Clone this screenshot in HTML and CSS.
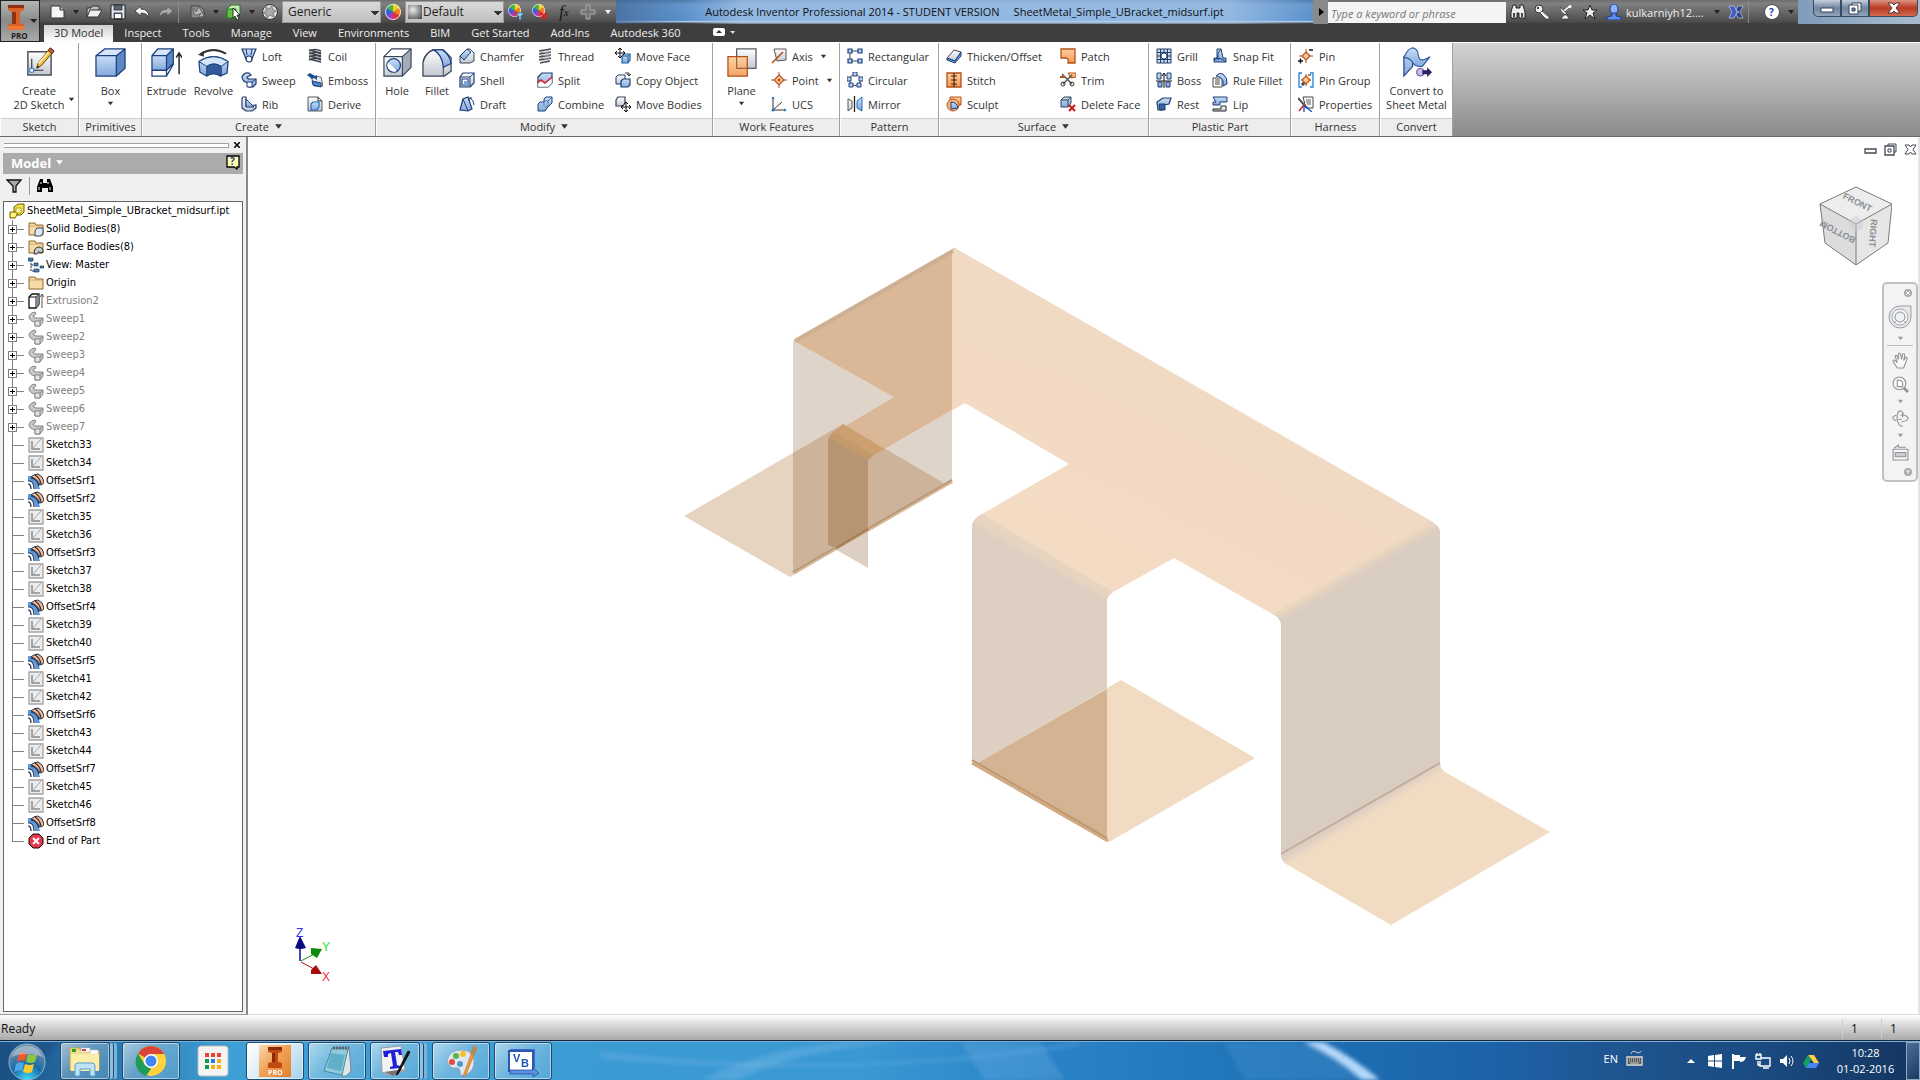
FILE: index.html
```html
<!DOCTYPE html>
<html lang="en">
<head>
<meta charset="utf-8">
<title>Autodesk Inventor Professional 2014 - SheetMetal_Simple_UBracket_midsurf.ipt</title>
<link rel="stylesheet" href="styles.css">
</head>
<body>
<svg class="defs" aria-hidden="true">
<defs>
<linearGradient id="gb" x1="0" y1="0" x2="0" y2="1"><stop offset="0" stop-color="#c9def5"/><stop offset="1" stop-color="#82a8dc"/></linearGradient>
<linearGradient id="gg" x1="0" y1="0" x2="0" y2="1"><stop offset="0" stop-color="#fff"/><stop offset="1" stop-color="#c3c8d0"/></linearGradient>
<linearGradient id="go" x1="0" y1="0" x2="0" y2="1"><stop offset="0" stop-color="#ffcf9f"/><stop offset="1" stop-color="#f59a55"/></linearGradient>
<symbol id="sketch" viewBox="0 0 32 32"><path d="M4 5h24v24H4z" fill="url(#gg)" stroke="#4a505c" stroke-width="1.5"/><path d="M8 12v12h12" fill="none" stroke="#333" stroke-width="1.2"/><path d="M6 22h4v4H6z" fill="#fff" stroke="#1d6fc4"/><path d="M13 22l2-6L27 1l4 3-13 15z" fill="#f7c440" stroke="#5a4010"/><path d="M15 17L28 2" stroke="#fff3b0" stroke-width="1.5"/><path d="M27 1l4 3-2 3-4-3z" fill="#c8603a" stroke="#5a2a10"/><path d="M13 22l1-3 2 2z" fill="#222"/></symbol>
<symbol id="box" viewBox="0 0 32 32"><path d="M1 9h21v21H1z" fill="url(#gb)"/><path d="M1 9l9-7h21l-9 7z" fill="#d5e6f8"/><path d="M22 9l9-7v20l-9 8z" fill="#5e87c4"/><path d="M1 9l9-7h21v20l-9 8H1zM1 9h21v21M22 9l9-7" fill="none" stroke="#1c3f80" stroke-width="1.3"/></symbol>
<symbol id="extrude" viewBox="0 0 32 32"><path d="M1 9h15v15H1z" fill="url(#gb)"/><path d="M1 24h15v6H1z" fill="#fff"/><path d="M1 9l6-7h16l-7 7z" fill="#d5e6f8"/><path d="M16 9l7-7v16l-7 6z" fill="#5e87c4"/><path d="M1 9l6-7h16v16l-7 12H1zM1 9h15v21M16 9l7-7M1 24h15l7-7" fill="none" stroke="#1c3f80" stroke-width="1.3"/><path d="M29 28V7m-3 4l3-5 3 5" fill="none" stroke="#222" stroke-width="1.5"/></symbol>
<symbol id="revolve" viewBox="0 0 32 32"><path d="M1 15q15-10 30 0l-1 12-7 3q-7-5-14 0l-7-4z" fill="url(#gb)" stroke="#1c3f80" stroke-width="1.3"/><path d="M1 15q15-10 30 0l-7 5q-8-5-15 0z" fill="#d5e6f8" stroke="#1c3f80"/><path d="M9 20q7-5 15 0v10q-8-5-15 0z" fill="#345a9c" stroke="#1c3f80"/><path d="M3 7q13-8 26 0" fill="none" stroke="#333" stroke-width="2"/><path d="M0 8l6-4v6z" fill="#333"/></symbol>
<symbol id="hole" viewBox="0 0 32 32"><path d="M2 10h19v20H2z" fill="url(#gg)"/><path d="M2 10l8-8h20l-9 8z" fill="#fff"/><path d="M21 10l9-8v19l-9 9z" fill="#a5abb5"/><path d="M2 10l8-8h20v19l-9 9H2zM2 10h19v20M21 10l9-8" fill="none" stroke="#384458" stroke-width="1.2"/><circle cx="12" cy="19" r="7" fill="url(#gb)" stroke="#1c3f80" stroke-width="1.3"/><path d="M6 16q7 5 9 9a7 7 0 0 1-9-9" fill="#fff"/></symbol>
<symbol id="fillet" viewBox="0 0 32 32"><path d="M1 30V16Q4 5 12 3h10l8 8v14l-7 5z" fill="url(#gg)" stroke="#384458" stroke-width="1.3"/><path d="M12 3q-8 2-11 11M22 30V20" stroke="#384458" fill="none"/><path d="M12 3h9q8 5 9 14l-8 4Q21 8 12 3z" fill="url(#gb)" stroke="#1c3f80" stroke-width="1.3"/></symbol>
<symbol id="plane" viewBox="0 0 32 32"><path d="M11 2h20v20H11z" fill="url(#gg)" stroke="#555c68" stroke-width="1.3"/><path d="M2 10h20v20H2z" fill="url(#go)" fill-opacity=".9" stroke="#b5501a" stroke-width="1.3"/><path d="M11 10v12h11" fill="none" stroke="#8a5030"/></symbol>
<symbol id="convert" viewBox="0 0 32 32"><path d="M3 30V10l9-9v19z" fill="url(#gb)" stroke="#1c3f80" stroke-width="1.2"/><path d="M3 11Q7 1 12 1t6 8 12 1l-8 10q-7 1-10-4T3 11z" fill="url(#gb)" stroke="#2c5aa0" stroke-width="1.2"/><circle cx="20" cy="26" r="4" fill="#c9c0ea" stroke="#5a4aa0"/><path d="M22 24h5v-3l5 5-5 5v-3h-5z" fill="#2c2060"/></symbol>
<symbol id="loft" viewBox="0 0 16 16"><path d="M1 1h14l-4 10q-3 5-6 0z" fill="url(#gb)" stroke="#1f3c73" stroke-width="1.2"/><path d="M5 1l1 6m5-6l-1 6" stroke="#1f3c73"/><circle cx="8" cy="11" r="3" fill="#fff" stroke="#1f3c73" stroke-width="1.2"/></symbol>
<symbol id="sweep" viewBox="0 0 16 16"><path d="M1 5q2-5 7-4l2 2-4 2q0 2 3 2h6v5l-3 3H8v-4Q1 10 1 5z" fill="url(#gb)" stroke="#1f3c73" stroke-width="1.2"/><path d="M6 10h5v5H6z" fill="#fff" stroke="#1f3c73"/><path d="M11 10l4-3" stroke="#1f3c73"/></symbol>
<symbol id="rib" viewBox="0 0 16 16"><path d="M2 1h3v9l10-1v3l-4 3H5l-4-3V3z" fill="url(#gg)" stroke="#1f3c73" stroke-width="1.2"/><path d="M5 3l8 8H5z" fill="url(#gb)" stroke="#1f3c73"/></symbol>
<symbol id="coil" viewBox="0 0 16 16"><path d="M2 3q6-3 12 0M2 6q6-3 12 0M2 9q6-3 12 0M2 12q6-3 12 0M2 2l12 3M2 5l12 3M2 8l12 3M2 11l12 3" fill="none" stroke="#3d424a" stroke-width="1.4"/></symbol>
<symbol id="emboss" viewBox="0 0 16 16"><path d="M4 4l10 1 2 9H7z" fill="url(#gg)" stroke="#666"/><path d="M0 3l3-2 5 3 2-1v5L7 6 5 7z" fill="#1f4c93"/><path d="M5 9l9 2v4l-8-2z" fill="#4a8ad0" stroke="#1f3c73"/></symbol>
<symbol id="derive" viewBox="0 0 16 16"><path d="M1 1h10l4 4v10H1z" fill="url(#gg)" stroke="#555"/><path d="M11 1v4h4" fill="none" stroke="#333"/><path d="M4 8l2-2h6v5l-2 3H4z" fill="url(#gb)" stroke="#1d6fc4" stroke-width="1.2"/></symbol>
<symbol id="chamfer" viewBox="0 0 16 16"><path d="M1 15V8l7-7h3l4 4v8l-4 2z" fill="url(#gg)" stroke="#384458"/><path d="M1 8l7-7 4 3-7 8z" fill="url(#gb)" stroke="#1f3c73"/></symbol>
<symbol id="shell" viewBox="0 0 16 16"><path d="M1 5l3-4h11v10l-4 4H1z" fill="url(#gg)" stroke="#1f3c73" stroke-width="1.2"/><path d="M1 5h10v10M11 5l4-4" fill="none" stroke="#1f3c73"/><path d="M3 7h6v6H3z" fill="#fff" stroke="#1f4c93" stroke-width="1.2"/><path d="M5 9h4v4H5z" fill="#7ba5dc"/></symbol>
<symbol id="draft" viewBox="0 0 16 16"><path d="M1 14L4 3l5-2 4 12-4 2z" fill="url(#gb)" stroke="#1f3c73" stroke-width="1.2"/><path d="M4 3l5 12M11 2q4 2 4 7m-5-7h3M10 2v3" fill="none" stroke="#1f3c73"/></symbol>
<symbol id="thread" viewBox="0 0 16 16"><path d="M4 1h8v14H4z" fill="#e4e6ea"/><path d="M2 3l12-2M2 6l12-2M2 9l12-2M2 12l12-2M3 15l10-2" stroke="#4a4f58" stroke-width="1.4"/><path d="M3 4l10 1M3 7l10 1M3 10l10 1" stroke="#999"/></symbol>
<symbol id="split" viewBox="0 0 16 16"><path d="M1 5l4-4h10v10l-4 4H1z" fill="url(#gb)" stroke="#1f3c73" stroke-width="1.2"/><path d="M1 11l3-2 4 2 7-5v5l-4 4H1z" fill="#fff" stroke="#888" stroke-width=".6"/><path d="M0 11l4-3 4 3 7-6" fill="none" stroke="#d62424" stroke-width="1.5"/></symbol>
<symbol id="combine" viewBox="0 0 16 16"><path d="M1 8l2-2h4V3l2-2h6v6l-4 4-1 1-2 3H1z" fill="url(#gb)" stroke="#1f3c73"/><path d="M7 6v4M11 5v6H8M11 5l4-4M7 5h4" fill="none" stroke="#3b64a5" stroke-width=".8"/></symbol>
<symbol id="moveface" viewBox="0 0 16 16"><path d="M7 8l2-2h6v6l-2 3H7z" fill="url(#gb)" stroke="#1d5fa4" stroke-width="1.2"/><path d="M7 8h6v7m0-7l2-2" fill="none" stroke="#1d5fa4"/><path d="M5 0v10M0 5h10M3 2l2-2 2 2M3 8l2 2 2-2M2 3L0 5l2 2M8 3l2 2-2 2" fill="none" stroke="#111"/></symbol>
<symbol id="copyobj" viewBox="0 0 16 16"><path d="M1 5l2-2h7v6l-2 3H1z" fill="url(#gg)" stroke="#1f3c73"/><path d="M6 9l2-2h7v6l-2 2H6z" fill="url(#gb)" stroke="#1f3c73" stroke-width="1.2"/><path d="M10 1h4v3m-2-2l2 2 2-2" fill="none" stroke="#333"/></symbol>
<symbol id="movebody" viewBox="0 0 16 16"><path d="M1 4l2-3h7v6l-2 3H1z" fill="url(#gg)" stroke="#384458" stroke-width="1.2"/><path d="M11 6v10M6 11h10M9 8l2-2 2 2M9 14l2 2 2-2M8 9l-2 2 2 2M14 9l2 2-2 2" fill="none" stroke="#111"/></symbol>
<symbol id="axis" viewBox="0 0 16 16"><path d="M3 1h12v11l-9 1z" fill="url(#gg)" stroke="#555"/><path d="M1 15L12 4" stroke="#b5501a" stroke-width="1.6"/></symbol>
<symbol id="point" viewBox="0 0 16 16"><path d="M8 0v16M0 8h16" stroke="#b5501a"/><path d="M8 3l5 5-5 5-5-5z" fill="#fbc89a" stroke="#b5501a" stroke-width="1.2"/><circle cx="8" cy="8" r="1.5" fill="#b5501a"/></symbol>
<symbol id="ucs" viewBox="0 0 16 16"><path d="M2 1v13h13M2 14l9-8" fill="none" stroke="#333"/><path d="M1 3l1-2 1 2m10 10l2 1-2 1" fill="none" stroke="#1d6fc4"/><circle cx="2" cy="14" r="1.5" fill="#1d6fc4"/></symbol>
<symbol id="rect" viewBox="0 0 16 16"><path d="M3 3h10M3 3v10h10" fill="none" stroke="#444"/><path d="M1 1h4v4H1zM11 1h4v4h-4zM1 11h4v4H1zM11 11h4v4h-4z" fill="#b9d2f2" stroke="#1c3f80" stroke-width="1.2"/></symbol>
<symbol id="circ" viewBox="0 0 16 16"><circle cx="8" cy="8" r="5.5" fill="none" stroke="#444"/><path d="M6 0h4v4H6zM0 5h4v4H0zM12 5h4v4h-4zM2 11h4v4H2zM10 11h4v4h-4z" fill="#b9d2f2" stroke="#1c3f80"/></symbol>
<symbol id="mirror" viewBox="0 0 16 16"><path d="M1 3l4 2v7l-4 3z" fill="url(#gg)" stroke="#555"/><path d="M15 1l-5 4v7l5 3z" fill="url(#gb)" stroke="#1d6fc4"/><path d="M7.500 0v16" stroke="#222" stroke-width="1.3"/></symbol>
<symbol id="thicken" viewBox="0 0 16 16"><path d="M1 10l7-8 7 2-6 9z" fill="url(#gg)" stroke="#444"/><path d="M1 10l8 3 6-9v4l-6 7-8-3z" fill="#5aa3dc" stroke="#1f3c73"/></symbol>
<symbol id="stitch" viewBox="0 0 16 16"><path d="M1 1h14v14H1z" fill="url(#go)" stroke="#b5501a" stroke-width="1.3"/><path d="M8 1v14M5 4h6M5 8h6M5 12h6" stroke="#442211" stroke-width="1.2"/></symbol>
<symbol id="sculpt" viewBox="0 0 16 16"><path d="M4 1h11v8H4z" fill="url(#go)" stroke="#b5501a"/><circle cx="7" cy="9" r="6" fill="#fcb47c" stroke="#b5501a"/><path d="M5 13V6q6 0 7 6z" fill="url(#gb)" stroke="#1c3f80"/></symbol>
<symbol id="patch" viewBox="0 0 16 16"><path d="M1 1h14v14H8q1-5-2-5H1z" fill="url(#go)" stroke="#b5501a" stroke-width="1.3"/></symbol>
<symbol id="trim" viewBox="0 0 16 16"><path d="M8 1h8v4l-5 1z" fill="url(#go)" stroke="#b5501a"/><path d="M2 2l10 10M12 3L3 12" stroke="#555" stroke-width="1.5"/><circle cx="3" cy="12" r="2" fill="none" stroke="#333"/><circle cx="12" cy="12" r="2" fill="none" stroke="#333"/><path d="M0 5h5" stroke="#b5501a" stroke-width="2"/></symbol>
<symbol id="delface" viewBox="0 0 16 16"><path d="M1 4l3-3h7v6l-3 4H1z" fill="url(#gb)" stroke="#384458"/><path d="M1 4h7v7m0-7l3-3" fill="none" stroke="#384458"/><path d="M9 9l6 6m0-6l-6 6" stroke="#d01818" stroke-width="2"/></symbol>
<symbol id="grill" viewBox="0 0 16 16"><path d="M1 1h14v14H1z" fill="#c9d9ee"/><path d="M1 1h14v14H1zM1 4.500h14M1 8h14M1 11.500h14M4.500 1v14M8 1v14M11.500 1v14" fill="none" stroke="#26406e"/><circle cx="8" cy="8" r="3" fill="#fff" stroke="#26406e"/></symbol>
<symbol id="boss" viewBox="0 0 16 16"><path d="M1 1h4v6H1zM11 1h4v6h-4zM2 10h4v5H2zM10 10h4v5h-4z" fill="url(#gb)" stroke="#1f3c73"/><path d="M8 16V2M6 4l2-3 2 3M0 9h16" fill="none" stroke="#111"/></symbol>
<symbol id="rest" viewBox="0 0 16 16"><path d="M1 6l6-4h8l-2 6-5 1-2 5H2z" fill="url(#gb)" stroke="#1f3c73" stroke-width="1.2"/><path d="M3 8h6v6H4z" fill="#3b64a5" stroke="#1f3c73"/></symbol>
<symbol id="snap" viewBox="0 0 16 16"><path d="M5 1h4l2 9h3v4H2v-4h3z" fill="url(#gb)" stroke="#1f3c73"/><path d="M9 1l-3 4v7M2 12q6-4 12 2" stroke="#1c3f80" fill="none"/></symbol>
<symbol id="rulefillet" viewBox="0 0 16 16"><path d="M1 6h9v9H1z" fill="#fff" stroke="#444"/><path d="M3 8h5M3 10h5M3 12h5" stroke="#444"/><path d="M4 4q3-4 7-2 5 4 4 10l-4 2V9Q9 4 4 4z" fill="url(#gb)" stroke="#1c3f80"/></symbol>
<symbol id="lip" viewBox="0 0 16 16"><path d="M1 1h14v5H8v3H1V6h3z" fill="url(#gb)" stroke="#1f3c73"/><path d="M1 13h8v-3h5v5H1z" fill="url(#gg)" stroke="#222"/></symbol>
<symbol id="pin" viewBox="0 0 16 16"><path d="M8 1v14M1 8h14" stroke="#b5501a"/><path d="M8 4l4 4-4 4-4-4z" fill="#fbc89a" stroke="#b5501a" stroke-width="1.2"/><path d="M0 13h5M2.500 10.500v5M11 2h4" stroke="#111" stroke-width="1.3"/></symbol>
<symbol id="pingroup" viewBox="0 0 16 16"><path d="M4 1H1v14h3M12 1h3v14h-3" fill="none" stroke="#1d84d8" stroke-width="1.3"/><path d="M8 2v12M3 8h10" stroke="#b5501a"/><path d="M8 4l4 4-4 4-4-4z" fill="#fbc89a" stroke="#b5501a" stroke-width="1.2"/><path d="M3 12h4M5 10v4M10 3h3" stroke="#111"/></symbol>
<symbol id="props" viewBox="0 0 16 16"><path d="M5 1h10v11H8z" fill="#fff" stroke="#444"/><path d="M8 4h5M8 6h5M9 8h4" stroke="#555"/><path d="M0 2l9 10" stroke="#555" stroke-width="2"/><path d="M1 15l5-6" stroke="#d02020" stroke-width="1.5"/><path d="M6 10v6m1-6l7 6" stroke="#1d50c4" stroke-width="1.3"/></symbol>
<symbol id="new" viewBox="0 0 16 16"><path d="M1 2h9l4 4v8H1z" fill="#f5f5f5" stroke="#333"/><path d="M10 2v4h4" fill="#bbb" stroke="#333"/></symbol>
<symbol id="open" viewBox="0 0 16 16"><path d="M1 13V4h4l1-2h7v4" fill="#bbb" stroke="#333"/><path d="M1 13l3-7h12l-4 7z" fill="#eee" stroke="#333"/></symbol>
<symbol id="save" viewBox="0 0 16 16"><path d="M1 1h14v14H1z" fill="#dfe2e8" stroke="#222"/><path d="M4 1h8v5H4zM4 9h8v6H4z" fill="#5a6478" stroke="#222" stroke-width=".7"/><path d="M5 10h6v4H5z" fill="#fff"/></symbol>
<symbol id="undo" viewBox="0 0 16 16"><path d="M1 7l6-5v3q8 0 8 9-2-5-8-5v3z" fill="#f5f5f5" stroke="#333" stroke-width=".8"/></symbol>
<symbol id="redo" viewBox="0 0 16 16"><path d="M15 7L9 2v3q-8 0-8 9 2-5 8-5v3z" fill="#aaa" stroke="#555" stroke-width=".8"/></symbol>
<symbol id="update" viewBox="0 0 16 16"><path d="M1 2h9l4 4v8H1z" fill="#888" stroke="#444"/><path d="M3 4l3 4 3-5 5 9-5 1 2-4-4 2-3-1z" fill="#bbb" stroke="#555" stroke-width=".7"/></symbol>
<symbol id="select" viewBox="0 0 16 16"><path d="M1 5l4-4h9v9l-4 4H1z" fill="#c8e6b8" stroke="#1f7a1f"/><path d="M1 5h9v9H1z" fill="#5fbf3f" stroke="#1f7a1f"/><path d="M7 4v10l2-2 2 4 2-1-2-4h3z" fill="#fff" stroke="#111" stroke-width=".8"/></symbol>
<symbol id="ball" viewBox="0 0 16 16"><circle cx="8" cy="8" r="7.500" fill="#ddd" stroke="#333"/><path d="M4 3l3 2 3-3 1 4 3 1-3 2 1 4-4-2-3 3-1-4-3-1 3-2z" fill="#aaa" stroke="#666" stroke-width=".7"/></symbol>
<symbol id="wheel" viewBox="0 0 16 16"><path d="M8 8V0a8 8 0 0 1 6.900 4z" fill="#f5d020"/><path d="M8 8l6.900-4a8 8 0 0 1 0 8z" fill="#f08020"/><path d="M8 8l6.900 4A8 8 0 0 1 8 16z" fill="#e03040"/><path d="M8 8v8a8 8 0 0 1-6.900-4z" fill="#a040c0"/><path d="M8 8l-6.900 4a8 8 0 0 1 0-8z" fill="#3060e0"/><path d="M8 8L1.100 4A8 8 0 0 1 8 0z" fill="#40b050"/><circle cx="8" cy="8" r="7.500" fill="none" stroke="#fff" stroke-opacity=".8"/></symbol>
<symbol id="wheeldrop" viewBox="0 0 16 16"><use href="#wheel" width="13" height="13"/><path d="M8 9h8l-3 3v4h-2v-4z" fill="#9bdcf8" stroke="#1d5fa4" stroke-width=".7"/></symbol>
<symbol id="wheelx" viewBox="0 0 16 16"><use href="#wheel" width="13" height="13"/><path d="M9 9l6 6m0-6l-6 6" stroke="#e02020" stroke-width="2"/></symbol>
<symbol id="cross" viewBox="0 0 16 16"><path d="M6 1h4v5h5v4h-5v5H6v-5H1V6h5z" fill="#777" stroke="#aaa"/></symbol>
<symbol id="binoc" viewBox="0 0 16 16"><path d="M3 1h3v3h4V1h3l2 7v6H9V9H7v5H1V8z" fill="#eee" stroke="#222"/><path d="M3 9h2v4H3zM11 9h2v4h-2z" fill="#444"/></symbol>
<symbol id="binocblack" viewBox="0 0 16 16"><path d="M3 1h3v4h4V1h3l3 8v5h-5v-4H5v4H0V9z" fill="#000"/><path d="M2 9v3M13 9v3M4 4v2M11 4v2" stroke="#fff"/></symbol>
<symbol id="key" viewBox="0 0 16 16"><circle cx="5" cy="5" r="4" fill="#f2f2f2" stroke="#333"/><path d="M8 7l7 6v2h-3L6 9z" fill="#f2f2f2" stroke="#333" stroke-width=".7"/><circle cx="4" cy="4" r="1.200" fill="#444"/></symbol>
<symbol id="dish" viewBox="0 0 16 16"><path d="M2 3q0 7 8 8zM6 11l-3 4h8l-2-4z" fill="#f2f2f2" stroke="#333" stroke-width=".7"/><path d="M6 7l6-5" stroke="#fff" stroke-width="1.500"/><circle cx="12" cy="2.500" r="1.500" fill="#fff"/></symbol>
<symbol id="star" viewBox="0 0 16 16"><path d="M8 1l2 5h5l-4 3 2 6-5-4-5 4 2-6-4-3h5z" fill="#eee" stroke="#222"/></symbol>
<symbol id="user" viewBox="0 0 16 16"><ellipse cx="8" cy="5" rx="4" ry="5" fill="#8fb2ff" stroke="#1c3f90"/><path d="M6 9h4v3l5 1v3H1v-3l5-1z" fill="#5f8af0" stroke="#1c3f90"/></symbol>
<symbol id="exch" viewBox="0 0 16 16"><path d="M1 2h5l3 6-3 6H1l3-6z" fill="#3a5ad0" stroke="#dde" stroke-width=".6"/><path d="M15 2h-5L8 6l3 2-3 2 2 4h5l-3-6z" fill="#27408f" stroke="#dde" stroke-width=".6"/></symbol>
<symbol id="down" viewBox="0 0 8 8"><path d="M1 2h6L4 6z" fill="currentColor"/></symbol>
<symbol id="root" viewBox="0 0 16 16"><path d="M5 4l4-3h6v8l-3 3H5z" fill="#f5e04a" stroke="#6a5a00"/><path d="M1 9h7v3l-2 3H1z" fill="#fff27a" stroke="#6a5a00"/><path d="M7 5h5v5H7z" fill="#fff9b0" stroke="#998800" stroke-width=".7"/></symbol>
<symbol id="folder" viewBox="0 0 16 16"><path d="M1 14V2h6l1 2h7v10z" fill="#f7dba6" stroke="#8a6430"/><path d="M1 5h14" stroke="#c89a5a" stroke-width=".7"/></symbol>
<symbol id="fsolid" viewBox="0 0 16 16"><use href="#folder"/><path d="M7 10l2-3h6v5l-2 3H7z" fill="#dce8f8" stroke="#384458"/></symbol>
<symbol id="fsurf" viewBox="0 0 16 16"><use href="#folder"/><path d="M6 15q0-7 5-7 4 0 4 5l-3 1q-1-3-3 1z" fill="#c5cad2" stroke="#333"/></symbol>
<symbol id="view" viewBox="0 0 16 16"><path d="M3 3v11h4M3 8h3" fill="none" stroke="#222" stroke-dasharray="2 1"/><path d="M0 1h5v3H0zM6 6h4v3H6zM6 12h5v3H6zM12 9h4v2h-4z" fill="#3f86c8" stroke="#123" stroke-width=".6"/></symbol>
<symbol id="textr" viewBox="0 0 16 16"><path d="M1 4l3-3h7v10l-3 4H1z" fill="#fff" stroke="#111" stroke-width="1.3"/><path d="M1 4h7v11m0-11l3-3" fill="none" stroke="#111"/><path d="M8 4l3-3v10l-3 4z" fill="#888"/><path d="M14 15V2m-2 2l2-3 2 3" fill="none" stroke="#555"/></symbol>
<symbol id="tsweep" viewBox="0 0 16 16"><path d="M1 5q2-4 6-4l1 2-3 2q0 1 3 2h7v4l-3 4H7v-4Q1 10 1 5z" fill="#c8c8c8" stroke="#858585"/><path d="M7 10h5v5H7zm5 0l3-3" fill="#e6e6e6" stroke="#858585"/></symbol>
<symbol id="tsk" viewBox="0 0 16 16"><path d="M1 1h14v14H1z" fill="#ececec" stroke="#a4a4a4" stroke-width="1.300"/><path d="M4 4v8h8" fill="none" stroke="#8a8a8a" stroke-width="1.500"/><path d="M5 11l8-9" stroke="#a4a4a4"/></symbol>
<symbol id="toff" viewBox="0 0 16 16"><path d="M0 3h3q7 3 9 13H7Q7 10 3 8H0z" fill="#5a9ad8"/><path d="M3 4q3-3 7-3 5 2 6 8-1 3-4 3Q10 6 3 4z" fill="#fcb985" stroke="#1c2c50"/><path d="M0 8h2q4 1 4 8M0 11h1q2 1 2 5M3 5q6 1 8 8M7 2q5 3 6 9" fill="none" stroke="#1c2c50" stroke-width="1.200"/></symbol>
<symbol id="tend" viewBox="0 0 16 16"><path d="M5 1h6l4 4v6l-4 4H5l-4-4V5z" fill="#e8344a" stroke="#111"/><path d="M5 5l6 6m0-6l-6 6" stroke="#fff" stroke-width="2"/></symbol>
<symbol id="filter" viewBox="0 0 16 16"><path d="M1 2h14l-5 6v6H7V8z" fill="#aaa" stroke="#111" stroke-width="1.300"/></symbol>
<symbol id="cube" viewBox="0 0 80 84"><path d="M44 5L80 22 44 42 8 22z" fill="#ededed"/><path d="M8 22l36 20v41L13 61z" fill="#dcdcdc"/><path d="M80 22L44 42v41l32-22z" fill="#e6e6e6"/><path d="M44 5l36 17-4 39-32 22-31-22-5-39zM8 22l36 20 36-20M44 42v41" fill="none" stroke="#7a7a7a"/><path d="M37 38l7-4 7 4v8l-7 4-7-4z" fill="#c5ccd6" opacity=".5"/></symbol>
</defs>
</svg>

<header class="top">
  <button class="app" aria-label="Application menu"><svg width="38" height="40" viewBox="0 0 38 40"><path d="M7 4h16v5l-4 2v11l4 1v6H7v-5l4-2V11L7 9z" fill="#d9622b"/><path d="M7 4h16v3H7zM11 11h4v12h-4z" fill="#8f3210"/><path d="M7 25h16v4H7z" fill="#f07a35"/><path d="M29 18h7l-3 4z" fill="#222"/><text x="10" y="38" class="apptext">PRO</text></svg></button>
  <div class="titlebar">
    <div class="qat">
      <button class="ib" aria-label="New"><svg><use href="#new"/></svg></button><button class="ab" aria-label="New options"><svg><use href="#down"/></svg></button>
      <button class="ib" aria-label="Open"><svg><use href="#open"/></svg></button><button class="ib" aria-label="Save"><svg><use href="#save"/></svg></button><button class="ib" aria-label="Undo"><svg><use href="#undo"/></svg></button><button class="ib" aria-label="Redo"><svg><use href="#redo"/></svg></button>
      <i class="vsep"></i>
      <button class="ib" aria-label="Update"><svg><use href="#update"/></svg></button><button class="ab" aria-label="Update options"><svg><use href="#down"/></svg></button>
      <button class="ib" aria-label="Select"><svg><use href="#select"/></svg></button><button class="ab" aria-label="Select options"><svg><use href="#down"/></svg></button>
      <button class="ib" aria-label="Material"><svg><use href="#ball"/></svg></button>
      <select class="combo" aria-label="Material"><option>Generic</option></select>
      <button class="ib" aria-label="Appearance"><svg><use href="#wheel"/></svg></button>
      <select class="combo sphere" aria-label="Appearance"><option>Default</option></select>
      <button class="ib" aria-label="Adjust appearance"><svg><use href="#wheeldrop"/></svg></button><button class="ib" aria-label="Clear appearance"><svg><use href="#wheelx"/></svg></button>
      <button class="ib fx" aria-label="Parameters">f<sub>x</sub></button><button class="ib" aria-label="Measure"><svg><use href="#cross"/></svg></button>
      <button class="ab last" aria-label="Customize"><svg><use href="#down"/></svg></button>
    </div>
    <div class="caption"><span>Autodesk Inventor Professional 2014 - STUDENT VERSION</span><span>SheetMetal_Simple_UBracket_midsurf.ipt</span></div>
    <div class="info">
      <button class="play" aria-label="Collapse search"><svg width="8" height="10" viewBox="0 0 8 10"><path d="M2 1l5 4-5 4z" fill="#000"/></svg></button>
      <input class="search" type="text" aria-label="Search" placeholder="Type a keyword or phrase">
      <button class="ib" aria-label="Find"><svg><use href="#binoc"/></svg></button><button class="ib" aria-label="Subscription"><svg><use href="#key"/></svg></button><button class="ib" aria-label="Communication center"><svg><use href="#dish"/></svg></button><button class="ib" aria-label="Favorites"><svg><use href="#star"/></svg></button>
      <button class="acct"><svg><use href="#user"/></svg>kulkarniyh12....</button><button class="ab" aria-label="Account options"><svg><use href="#down"/></svg></button>
      <button class="ib" aria-label="Exchange apps"><svg><use href="#exch"/></svg></button><i class="vsep"></i>
      <button class="ib" aria-label="Help"><svg viewBox="0 0 16 16"><circle cx="8" cy="8" r="7.500" fill="#fff" stroke="#445"/><text x="5" y="12" class="qm">?</text></svg></button><button class="ab" aria-label="Help options"><svg><use href="#down"/></svg></button>
    </div>
    <div class="wincontrols">
      <button aria-label="Minimize"><svg width="14" height="10" viewBox="0 0 14 10"><path d="M1 5h12v4H1z" fill="#fff" stroke="#345"/></svg></button>
      <button aria-label="Restore"><svg width="14" height="13" viewBox="0 0 14 13"><path d="M4 1h9v8H4z" fill="#fff" stroke="#345"/><path d="M1 3h9v9H1z" fill="#fff" stroke="#345"/><path d="M4 6h3v3H4z" fill="#789" stroke="#345"/></svg></button>
      <button class="close" aria-label="Close"><svg width="14" height="12" viewBox="0 0 14 12"><path d="M1 1h4l2 2 2-2h4L9 6l4 5H9L7 9l-2 2H1l4-5z" fill="#fff" stroke="#533"/></svg></button>
    </div>
  </div>
  <nav class="tabs">
    <button class="on">3D Model</button><button>Inspect</button><button>Tools</button><button>Manage</button><button>View</button><button>Environments</button><button>BIM</button><button>Get Started</button><button>Add-Ins</button><button>Autodesk 360</button>
    <button class="mini" aria-label="Minimize ribbon"><svg width="26" height="10" viewBox="0 0 26 10"><rect x="1" y="1" width="12" height="8" rx="2" fill="#fff"/><path d="M4 6h6L7 3z" fill="#333"/><path d="M18 4h5l-2 3z" fill="#ddd"/></svg></button>
  </nav>
</header>

<main class="ribbon">
  <section class="panel p-sketch"><div class="tools">
    <button class="big"><svg><use href="#sketch"/></svg><span>Create<br>2D Sketch</span></button><button class="side" aria-label="Sketch options"><svg><use href="#down"/></svg></button></div><h2>Sketch</h2></section>
  <section class="panel p-prim"><div class="tools"><button class="big"><svg><use href="#box"/></svg><span>Box</span><svg class="dn"><use href="#down"/></svg></button></div><h2>Primitives</h2></section>
  <section class="panel p-create"><div class="tools">
    <button class="big"><svg><use href="#extrude"/></svg><span>Extrude</span></button>
    <button class="big"><svg><use href="#revolve"/></svg><span>Revolve</span></button>
    <div class="col"><button><svg><use href="#loft"/></svg>Loft</button><button><svg><use href="#sweep"/></svg>Sweep</button><button><svg><use href="#rib"/></svg>Rib</button></div>
    <div class="col"><button><svg><use href="#coil"/></svg>Coil</button><button><svg><use href="#emboss"/></svg>Emboss</button><button><svg><use href="#derive"/></svg>Derive</button></div>
  </div><h2>Create <svg><use href="#down"/></svg></h2></section>
  <section class="panel p-modify"><div class="tools">
    <button class="big"><svg><use href="#hole"/></svg><span>Hole</span></button>
    <button class="big"><svg><use href="#fillet"/></svg><span>Fillet</span></button>
    <div class="col"><button><svg><use href="#chamfer"/></svg>Chamfer</button><button><svg><use href="#shell"/></svg>Shell</button><button><svg><use href="#draft"/></svg>Draft</button></div>
    <div class="col"><button><svg><use href="#thread"/></svg>Thread</button><button><svg><use href="#split"/></svg>Split</button><button><svg><use href="#combine"/></svg>Combine</button></div>
    <div class="col"><button><svg><use href="#moveface"/></svg>Move Face</button><button><svg><use href="#copyobj"/></svg>Copy Object</button><button><svg><use href="#movebody"/></svg>Move Bodies</button></div>
  </div><h2>Modify <svg><use href="#down"/></svg></h2></section>
  <section class="panel p-work"><div class="tools">
    <button class="big"><svg><use href="#plane"/></svg><span>Plane</span><svg class="dn"><use href="#down"/></svg></button>
    <div class="col"><button><svg><use href="#axis"/></svg>Axis<svg class="dn"><use href="#down"/></svg></button><button><svg><use href="#point"/></svg>Point<svg class="dn"><use href="#down"/></svg></button><button><svg><use href="#ucs"/></svg>UCS</button></div>
  </div><h2>Work Features</h2></section>
  <section class="panel p-pattern"><div class="tools">
    <div class="col"><button><svg><use href="#rect"/></svg>Rectangular</button><button><svg><use href="#circ"/></svg>Circular</button><button><svg><use href="#mirror"/></svg>Mirror</button></div>
  </div><h2>Pattern</h2></section>
  <section class="panel p-surface"><div class="tools">
    <div class="col"><button><svg><use href="#thicken"/></svg>Thicken/Offset</button><button><svg><use href="#stitch"/></svg>Stitch</button><button><svg><use href="#sculpt"/></svg>Sculpt</button></div>
    <div class="col"><button><svg><use href="#patch"/></svg>Patch</button><button><svg><use href="#trim"/></svg>Trim</button><button><svg><use href="#delface"/></svg>Delete Face</button></div>
  </div><h2>Surface <svg><use href="#down"/></svg></h2></section>
  <section class="panel p-plastic"><div class="tools">
    <div class="col"><button><svg><use href="#grill"/></svg>Grill</button><button><svg><use href="#boss"/></svg>Boss</button><button><svg><use href="#rest"/></svg>Rest</button></div>
    <div class="col"><button><svg><use href="#snap"/></svg>Snap Fit</button><button><svg><use href="#rulefillet"/></svg>Rule Fillet</button><button><svg><use href="#lip"/></svg>Lip</button></div>
  </div><h2>Plastic Part</h2></section>
  <section class="panel p-harness"><div class="tools">
    <div class="col"><button><svg><use href="#pin"/></svg>Pin</button><button><svg><use href="#pingroup"/></svg>Pin Group</button><button><svg><use href="#props"/></svg>Properties</button></div>
  </div><h2>Harness</h2></section>
  <section class="panel p-convert"><div class="tools"><button class="big"><svg><use href="#convert"/></svg><span>Convert to<br>Sheet Metal</span></button></div><h2>Convert</h2></section>
</main>

<div class="work">
  <aside class="browser">
    <div class="grip"><i></i><button aria-label="Close panel"><svg width="6" height="6" viewBox="0 0 6 6"><path d="M0 0l6 6M6 0L0 6" stroke="#000" stroke-width="1.500"/></svg></button></div>
    <div class="bhead"><button>Model <svg><use href="#down"/></svg></button><button aria-label="Help"><svg class="hq" viewBox="0 0 14 15"><path d="M1 1h12v11h-2v2l-3-2H1z" fill="#ffffb0" stroke="#000" stroke-width="1.300"/><text x="4" y="10" class="qm">?</text></svg></button></div>
    <div class="btools"><button aria-label="Filter"><svg><use href="#filter"/></svg></button><i></i><button aria-label="Find"><svg><use href="#binocblack"/></svg></button></div>
    <div class="tree">
      <div class="root"><svg><use href="#root"/></svg>SheetMetal_Simple_UBracket_midsurf.ipt</div>
      <ul>
        <li><button aria-label="Expand"></button><svg><use href="#fsolid"/></svg>Solid Bodies(8)</li>
        <li><button aria-label="Expand"></button><svg><use href="#fsurf"/></svg>Surface Bodies(8)</li>
        <li><button aria-label="Expand"></button><svg><use href="#view"/></svg>View: Master</li>
        <li><button aria-label="Expand"></button><svg><use href="#folder"/></svg>Origin</li>
        <li class="dim"><button aria-label="Expand"></button><svg><use href="#textr"/></svg>Extrusion2</li>
        <li class="dim"><button aria-label="Expand"></button><svg><use href="#tsweep"/></svg>Sweep1</li>
        <li class="dim"><button aria-label="Expand"></button><svg><use href="#tsweep"/></svg>Sweep2</li>
        <li class="dim"><button aria-label="Expand"></button><svg><use href="#tsweep"/></svg>Sweep3</li>
        <li class="dim"><button aria-label="Expand"></button><svg><use href="#tsweep"/></svg>Sweep4</li>
        <li class="dim"><button aria-label="Expand"></button><svg><use href="#tsweep"/></svg>Sweep5</li>
        <li class="dim"><button aria-label="Expand"></button><svg><use href="#tsweep"/></svg>Sweep6</li>
        <li class="dim"><button aria-label="Expand"></button><svg><use href="#tsweep"/></svg>Sweep7</li>
        <li><svg><use href="#tsk"/></svg>Sketch33</li>
        <li><svg><use href="#tsk"/></svg>Sketch34</li>
        <li><svg><use href="#toff"/></svg>OffsetSrf1</li>
        <li><svg><use href="#toff"/></svg>OffsetSrf2</li>
        <li><svg><use href="#tsk"/></svg>Sketch35</li>
        <li><svg><use href="#tsk"/></svg>Sketch36</li>
        <li><svg><use href="#toff"/></svg>OffsetSrf3</li>
        <li><svg><use href="#tsk"/></svg>Sketch37</li>
        <li><svg><use href="#tsk"/></svg>Sketch38</li>
        <li><svg><use href="#toff"/></svg>OffsetSrf4</li>
        <li><svg><use href="#tsk"/></svg>Sketch39</li>
        <li><svg><use href="#tsk"/></svg>Sketch40</li>
        <li><svg><use href="#toff"/></svg>OffsetSrf5</li>
        <li><svg><use href="#tsk"/></svg>Sketch41</li>
        <li><svg><use href="#tsk"/></svg>Sketch42</li>
        <li><svg><use href="#toff"/></svg>OffsetSrf6</li>
        <li><svg><use href="#tsk"/></svg>Sketch43</li>
        <li><svg><use href="#tsk"/></svg>Sketch44</li>
        <li><svg><use href="#toff"/></svg>OffsetSrf7</li>
        <li><svg><use href="#tsk"/></svg>Sketch45</li>
        <li><svg><use href="#tsk"/></svg>Sketch46</li>
        <li><svg><use href="#toff"/></svg>OffsetSrf8</li>
        <li><svg><use href="#tend"/></svg>End of Part</li>
      </ul>
    </div>
  </aside>
  <div class="view">
    <svg class="scene" role="img" aria-label="U bracket mid-surface model">
      <defs>
        <linearGradient id="foldL" gradientUnits="userSpaceOnUse" x1="1043" y1="553" x2="1036" y2="565"><stop offset="0" stop-color="#e8d5bf"/><stop offset=".5" stop-color="#e3d3c1"/><stop offset="1" stop-color="#ddd0c3"/></linearGradient>
        <linearGradient id="foldR" gradientUnits="userSpaceOnUse" x1="1353" y1="569" x2="1360" y2="581"><stop offset="0" stop-color="#ecd7c0"/><stop offset=".5" stop-color="#ddcfc0"/><stop offset="1" stop-color="#d9cdc2"/></linearGradient>
        <linearGradient id="footR" gradientUnits="userSpaceOnUse" x1="1360" y1="809" x2="1366" y2="819"><stop offset="0" stop-color="#dacdc1"/><stop offset="1" stop-color="#f2dbc3"/></linearGradient>
        <linearGradient id="top" gradientUnits="userSpaceOnUse" x1="1150" y1="330" x2="1060" y2="520"><stop offset="0" stop-color="#f1dac3"/><stop offset=".5" stop-color="#f1d9c3"/><stop offset="1" stop-color="#f3dbc4"/></linearGradient>
      </defs>
      <g transform="translate(-248 -137)">
        <path d="M793 342L952 252V482L793 573z" fill="#dfd4c9"/>
        <path d="M684 516L843 424 947 485 790 577z" fill="#e6d4c0"/>
        <path d="M793 453L843 424 947 485 793 573z" fill="#cdb39a"/>
        <path d="M794 341L955 248 1433 522 1274 615 1174 558 1113 592 982 514 1069 464 965 403 874 455 835 432 894 397z" fill="url(#top)"/>
        <path d="M794 341L952 250V410L874 455 835 432 894 397z" fill="#dab897"/>
        <path d="M795 341L953 251" stroke="#cbb095" stroke-width="4"/>
        <path d="M794 340L955 248" stroke="#d6b391" stroke-width="1"/>
        <path d="M828 440Q829 435 835 431L874 455Q868 457 868 462V568L828 545z" fill="#ddd0c3"/>
        <path d="M828 440Q829 435 835 431L874 455Q868 457 868 462V531L836 549 828 545z" fill="#b79472"/>
        <path d="M833 433L843 424 885 449 874 455z" fill="#cb9f70"/>
        <path d="M829 438L833 433 874 455 868 460z" fill="#c29a6c"/>
        <path d="M793 573L952 481" stroke="#dab998" stroke-width="4"/>
        <path d="M793 572L952 480" stroke="#b7977a" stroke-width="2"/>
        <path d="M836 548L868 529" stroke="#a6825a" stroke-width="3"/>
        <path d="M972 525Q973 519 982 514L1113 592Q1107 596 1107 600V838L972 762z" fill="#ddd0c3"/>
        <path d="M974 521Q977 516 982 514L1113 592Q1108 595 1107 600L973 525z" fill="url(#foldL)"/>
        <path d="M980 762L1121 680 1255 758 1109 842z" fill="#f1dbc3"/>
        <path d="M978 763L1107 689V840z" fill="#d4b392"/>
        <path d="M972 763L1108 841" stroke="#d0aa84" stroke-width="3"/>
        <path d="M972 760L1107 838" stroke="#bf966c" stroke-width="2"/>
        <path d="M1432 522Q1440 527 1440 532V763L1281 855V622Q1279 617 1273 614z" fill="#d9cdc2"/>
        <path d="M1432 522Q1439 526 1440 532L1281 624Q1279 617 1273 614z" fill="url(#foldR)"/>
        <path d="M1281 855L1440 763Q1440 769 1445 772L1550 832 1391 925 1286 864Q1281 861 1281 855z" fill="url(#footR)"/>
        <path d="M1281 854L1440 763" stroke="#c0ab98" stroke-width="2"/>
        <path d="M300 961V946" stroke="#0a0aa0" stroke-width="1.500"/><path d="M300 936l6 12q-6 2-11 0z" fill="#0a0a80"/>
        <path d="M301 961l13-7" stroke="#0a9a0a"/><path d="M322 949l-11-1v6l6 4z" fill="#0c8a0c"/>
        <path d="M301 962l13 7" stroke="#b01010"/><path d="M322 974l-6-9-5 5v4z" fill="#a80c0c"/>
        <text x="296" y="937" class="ax z">Z</text><text x="322" y="951" class="ax y">Y</text><text x="322" y="981" class="ax x">X</text>
      </g>
    </svg>
    <div class="docctl">
      <button aria-label="Minimize document"><svg width="13" height="13" viewBox="0 0 13 13"><path d="M1 6h11v4H1z" fill="#fff" stroke="#444c58" stroke-width="1.300"/></svg></button>
      <button aria-label="Restore document"><svg width="13" height="13" viewBox="0 0 13 13"><path d="M4 1h8v8H4z" fill="#fff" stroke="#444c58"/><path d="M1 3h9v9H1z" fill="#fff" stroke="#444c58" stroke-width="1.300"/><path d="M4 6h3v3H4z" fill="none" stroke="#444c58"/></svg></button>
      <button aria-label="Close document"><svg width="13" height="13" viewBox="0 0 13 13"><path d="M1 2h4l1.500 2L8 2h4L9 6.500l3 4.500H8L6.500 9 5 11H1l3-4.500z" fill="#fff" stroke="#444c58"/></svg></button>
    </div>
    <svg class="viewcube" viewBox="0 0 80 84"><use href="#cube"/>
      <text transform="translate(44 23) rotate(27)" class="ct">FRONT</text><text transform="translate(27 47) rotate(208)" class="ct">BOTTOM</text><text transform="translate(58 51) rotate(94)" class="ct">RIGHT</text>
    </svg>
    <div class="navbar">
      <button class="end" aria-label="Close navigation bar"><svg width="10" height="10" viewBox="0 0 10 10"><circle cx="5" cy="5" r="4" fill="#aaa"/><path d="M3 3l4 4m0-4L3 7" stroke="#fff"/></svg></button>
      <button class="wh" aria-label="Steering wheel"><svg width="24" height="24" viewBox="0 0 24 24"><path d="M12 1h11v11A11 11 0 1 1 12 1z" fill="#e6e8ec" stroke="#9a9da2"/><circle cx="12" cy="12" r="8" fill="#f8f8f8" stroke="#a5a8ac"/><circle cx="12" cy="12" r="5" fill="#eef0f4" stroke="#8e9196"/><path d="M6 18l3-3m6 0l3 3" stroke="#8e9196"/></svg></button>
      <button class="nd" aria-label="Wheel options"><svg><use href="#down"/></svg></button>
      <i></i>
      <button class="nb" aria-label="Pan"><svg width="17" height="17" viewBox="0 0 16 16"><path d="M5 15L1 9q0-2 2-1l2 2-2-6q1-2 2 0l1 3V2q1-2 2 0l1 5 1-5q2-1 2 1l-1 5 2-3q2 0 1 2l-3 8z" fill="#f8f8f8" stroke="#8e9196"/></svg></button>
      <button class="nb" aria-label="Zoom"><svg width="17" height="17" viewBox="0 0 16 16"><circle cx="7" cy="7" r="6" fill="#f8f8f8" stroke="#8e9196"/><path d="M5 4h3l2 2v4H5z" fill="#fff" stroke="#8e9196"/><path d="M11 11l4 4" stroke="#8e9196" stroke-width="2.500"/></svg></button>
      <button class="nd" aria-label="Zoom options"><svg><use href="#down"/></svg></button>
      <button class="nb" aria-label="Orbit"><svg width="17" height="17" viewBox="0 0 16 16"><path d="M11 4Q9 0 7 1q-3 2-2 9 2 6 5 5M4 5Q0 6 1 8q1 2 3 2M9 11q7-1 6-4-1-1-3-2M8 5h4M10 3v4M6 9h3" fill="none" stroke="#8e9196"/></svg></button>
      <button class="nd" aria-label="Orbit options"><svg><use href="#down"/></svg></button>
      <button class="nb" aria-label="Look at"><svg width="17" height="17" viewBox="0 0 16 16"><path d="M1 5h14v10H1z" fill="#f8f8f8" stroke="#8e9196"/><path d="M3 8h10v4H3z" fill="#c9ccd2" stroke="#8e9196"/><path d="M2 4l4-3v2h7" fill="none" stroke="#8e9196"/></svg></button>
      <button class="end" aria-label="Navigation bar options"><svg width="10" height="10" viewBox="0 0 10 10"><circle cx="5" cy="5" r="4" fill="#aaa"/><path d="M3 4h4M4 6h2" stroke="#fff"/></svg></button>
    </div>
  </div>
</div>

<footer class="status"><span class="msg">Ready</span><span class="cell">1</span><span class="cell">1</span></footer>

<div class="taskbar">
  <svg class="aero" preserveAspectRatio="none" viewBox="0 0 1920 40" aria-hidden="true"><defs><filter id="soft" x="-10%" y="-30%" width="120%" height="160%"><feGaussianBlur stdDeviation="2"/></filter></defs><g filter="url(#soft)"><path d="M700 40Q780 0 860 0h40Q790 10 740 40z" fill="#8cc4ee" opacity=".3"/><path d="M600 10Q850 40 1080 0v4Q860 40 600 18z" fill="#8cc4ee" opacity=".25"/><path d="M960 0h80l25 40h-80z" fill="#6fb0e6" opacity=".3"/><path d="M1224 0h70q40 10 80 40h-130z" fill="#4a94d0" opacity=".35"/><path d="M1303 0h20q30 16 57 40h-18q-25-24-59-40z" fill="#b4d8fa"/><path d="M0 0h60L20 40H0z" fill="#1d4d80" opacity=".6"/></g></svg>
  <button class="orb" aria-label="Start"><svg width="40" height="40" viewBox="0 0 40 40"><defs><radialGradient id="orb" cx=".5" cy="1" r=".9"><stop offset="0" stop-color="#3fe0ff"/><stop offset=".5" stop-color="#1a6aa8"/><stop offset="1" stop-color="#6f8ea8"/></radialGradient></defs><circle cx="20" cy="20" r="18" fill="url(#orb)" stroke="#8fb8d4"/><path d="M12 12q4-3 8-1l-2 8q-4-2-8 1z" fill="#f0582a"/><path d="M21 12q4 2 9 0l-2 8q-4 2-9 0z" fill="#8cc63e"/><path d="M9 22q4-3 8-1l-2 8q-4-2-8 1z" fill="#4aa8ea"/><path d="M18 22q5 2 9 0l-2 8q-4 2-9 0z" fill="#fcc92e"/><path d="M4 15a17 17 0 0 1 32 0q-16-6-32 0z" fill="#fff" opacity=".35"/></svg></button>
  <button class="task stack w50" aria-label="Windows Explorer"><svg width="34" height="34" viewBox="0 0 34 34"><path d="M2 26V4h9l2 3h18v19z" fill="#f2dc86" stroke="#c9a847"/><path d="M4 5h4v3H4z" fill="#2a9a3a"/><path d="M13 4h9v4h-9zM22 6h8v4h-8z" fill="#fff" stroke="#bbb" stroke-width=".5"/><path d="M14 5h4v2h-4z" fill="#d04030"/><path d="M3 10h28v17H3z" fill="#fbeea8"/><path d="M7 32V22q0-3 3-3h14q3 0 3 3v10h-5v-7H12v7z" fill="#bfe2f6" stroke="#5aa0cc"/></svg></button>
  <button class="task w58" aria-label="Chrome"><svg width="32" height="32" viewBox="0 0 32 32"><circle cx="16" cy="16" r="15" fill="#fdd23c"/><path d="M16 16L3 8.500A15 15 0 0 1 29 8.500L29.500 9H16z" fill="#db4437"/><path d="M3 8.500l7 11.500 6 4-5 7A15 15 0 0 1 3 8.500z" fill="#1f9d58"/><circle cx="16" cy="16" r="7" fill="#fff"/><circle cx="16" cy="16" r="5.500" fill="#4285f4"/></svg></button>
  <button class="task plain w58" aria-label="App launcher"><svg width="32" height="32" viewBox="0 0 32 32"><rect x="1" y="1" width="30" height="30" rx="3" fill="#f4f4f4" stroke="#bbb"/><path d="M8 8h4v4H8zM14 8h4v4h-4zM20 8h4v4h-4z" fill="#f04030"/><path d="M8 14h4v4H8zM8 20h4v4H8z" fill="#109a50"/><path d="M14 14h4v4h-4z" fill="#2080f0"/><path d="M20 14h4v4h-4zM14 20h4v4h-4zM20 20h4v4h-4z" fill="#f8b010"/></svg></button>
  <button class="task active w58" aria-label="Inventor"><svg width="32" height="32" viewBox="0 0 32 32"><defs><linearGradient id="inv" x1="0" y1="0" x2="1" y2="1"><stop offset="0" stop-color="#fbd9b0"/><stop offset=".5" stop-color="#f0a050"/><stop offset="1" stop-color="#e08030"/></linearGradient></defs><path d="M0 0h32v32H0z" fill="url(#inv)"/><path d="M9 2h14v5l-4 1v9l4 1v5H9v-5l4-1V8L9 7z" fill="#c04a12"/><path d="M9 2h14v3H9zM13 8h3v9h-3z" fill="#8a2c08"/><text x="9" y="30" class="invpro">PRO</text></svg></button>
  <button class="task w58" aria-label="Notepad"><svg width="32" height="32" viewBox="0 0 32 32"><path d="M12 3l16-1 2 24-5 5-4 0z" fill="#dfe6e8" stroke="#789"/><path d="M11 3l16 1-6 26-18-4z" fill="#8fcbdc" stroke="#4a8aa0"/><path d="M10 8l14 2-4 16-14-3z" fill="#5fb0c8"/><path d="M12 3h16" stroke="#567" stroke-width="3" stroke-dasharray="2 1"/></svg></button>
  <button class="task stack w50" aria-label="Text editor"><svg width="32" height="32" viewBox="0 0 32 32"><path d="M2 3l20-2 4 24-14 6-9-4z" fill="#f2f2f2" stroke="#999"/><path d="M5 27l20-3-11 7z" fill="#777"/><path d="M4 6l18-2 1 6-3 0-1-3h-3l2 13 3 1v2l-10 1v-2l3-1-2-13-3 1v3l-4 0z" fill="#2020d8"/><path d="M17 30L29 6l2 1-12 22z" fill="#111" stroke="#111"/></svg></button>
  <button class="task w58" aria-label="Paint"><svg width="34" height="34" viewBox="0 0 34 34"><path d="M3 17Q5 6 17 6t13 10-8 15q-6 2-6-3t-5-4-8-7z" fill="#dde8f2" stroke="#8fa8bc"/><circle cx="8" cy="18" r="3" fill="#e0483a"/><circle cx="12" cy="12" r="3" fill="#59b548"/><circle cx="19" cy="10" r="3" fill="#f4c030"/><circle cx="16" cy="20" r="3" fill="#4a9ad0"/><path d="M19 32l8-22 3 1-8 20z" fill="#ef9a3a" stroke="#b06a1a" stroke-width=".5"/><path d="M26 10l3-8q5 0 4 4l-3 6z" fill="#b58a5a"/></svg></button>
  <button class="task w58" aria-label="Visual Basic"><svg width="32" height="32" viewBox="0 0 32 32"><path d="M3 4h25v19h-3V8H3z" fill="#3a6ac8"/><path d="M2 6h24v20H2z" fill="#fff" stroke="#2c58b4" stroke-width="2"/><path d="M3 25h23v-2l6 5-6 4v-3H3z" fill="#5a90e0" stroke="#1c409a" stroke-width=".7"/><text x="6" y="17" class="vb">V</text><text x="14" y="22" class="vb">B</text></svg></button>
  <div class="tray">
    <span class="lang">EN</span>
    <svg class="kbd" width="17" height="16" viewBox="0 0 17 16"><path d="M5 4q1-4 5-2t5-1" fill="none" stroke="#ccc"/><path d="M1 7h15v8H1z" fill="#555" stroke="#ddd" stroke-width="1.300"/><path d="M3 9h11M3 11h11" stroke="#ddd" stroke-dasharray="1 1"/><path d="M4 13h9" stroke="#ddd"/></svg>
    <button class="more" aria-label="Show hidden icons"><svg width="8" height="6" viewBox="0 0 8 6"><path d="M0 5h8L4 1z" fill="#fff"/></svg></button>
    <button aria-label="Windows update"><svg width="16" height="16" viewBox="0 0 16 16"><path d="M1 3l6-1v5.500H1zM8 2l7-1v6.500H8zM1 8.500h6V14l-6-1zM8 8.500h7V15l-7-1z" fill="#fff"/></svg></button>
    <button aria-label="Action center"><svg width="16" height="16" viewBox="0 0 16 16"><path d="M2 1v15" stroke="#fff" stroke-width="2"/><path d="M3 2h6v2h6q-1 5-6 5V8H3z" fill="#fff"/></svg></button>
    <button aria-label="Network"><svg width="16" height="16" viewBox="0 0 16 16"><path d="M6 5h9v8H5V8M8 15h6M3 8v4h2M1 2h5v4H1zM2 0v2m3-2v2" fill="none" stroke="#fff" stroke-width="1.400"/></svg></button>
    <button aria-label="Volume"><svg width="16" height="16" viewBox="0 0 16 16"><path d="M1 6h3l4-4v12l-4-4H1z" fill="#fff"/><path d="M10 5q2 3 0 6M12 3q4 5 0 10" fill="none" stroke="#fff"/></svg></button>
    <button aria-label="Google Drive"><svg width="16" height="16" viewBox="0 0 16 16"><path d="M5 2h6l5 8h-5z" fill="#ffcf3f"/><path d="M5 2l3 5-5 8-3-5z" fill="#17a05d"/><path d="M6 10h10l-3 5H3z" fill="#4285f4"/></svg></button>
    <time class="clock">10:28<br>01-02-2016</time>
    <button class="desk" aria-label="Show desktop"></button>
  </div>
</div>
</body>
</html>
```

FILE: styles.css
```css
* { box-sizing: border-box; }
body {
  margin: 0;
  min-height: 100vh;
  display: flex;
  flex-direction: column;
  background: #f0f0f0;
  color: #333;
  font: 11px/15px "Open Sans", "Noto Sans", sans-serif;
}
button {
  margin: 0;
  padding: 0;
  border: 0;
  background: none;
  color: inherit;
  font: inherit;
  white-space: nowrap;
}
svg { display: block; flex: none; }
.defs { position: absolute; width: 0; height: 0; }

/* title bar and tabs */
.top {
  display: grid;
  grid-template-columns: 40px 1fr;
  grid-template-rows: 24px 18px;
  background: #3e3e3e;
}
.app {
  grid-row: 1 / 3;
  background: linear-gradient(#b5b5b5, #8a8a8a 50%, #a9a9a9);
  border: 1px solid #222;
}
.apptext { font: bold 8px "Open Sans", sans-serif; fill: #222; }
.titlebar {
  display: flex;
  background: linear-gradient(#4d7cae, #6496ce 20%, #5a90cc 85%, #a9c8e8 88%, #a9c8e8 92%, #3e3e3e 96%);
}
.qat, .info {
  display: flex;
  align-items: center;
  background: linear-gradient(#6e6e6e, #808080 15%, #4b4b4b 92%, #3a3a3a);
  color: #ddd;
}
.qat { width: 576px; padding-left: 6px; }
.ib { width: 24px; height: 24px; display: flex; align-items: center; justify-content: center; }
.ib svg { width: 16px; height: 16px; }
.ab { width: 12px; height: 24px; display: flex; align-items: center; justify-content: center; color: #222; }
.ab svg { width: 8px; height: 8px; }
.ab.last { width: 15px; color: #fff; }
.vsep { width: 8px; height: 22px; border-left: 1px solid #8a8a8a; }
.info .vsep { width: 12px; }
.info .ab { width: 14px; }
.fx { font: italic 16px/20px "Liberation Serif", serif; color: #111; }
.fx sub { font-size: 11px; }
.combo {
  width: 99px;
  height: 22px;
  padding: 0 16px 0 5px;
  border: 1px solid #999;
  border-radius: 0;
  appearance: none;
  font: 12px/20px "Open Sans", "Noto Sans", sans-serif;
  color: #222;
  background: linear-gradient(45deg, transparent 50%, #333 50%) 88px 9px / 4px 4px no-repeat,
    linear-gradient(-45deg, transparent 50%, #333 50%) 92px 9px / 4px 4px no-repeat,
    linear-gradient(#d9d9d9, #c0c0c0);
}
.sphere {
  padding-left: 17px;
  background: radial-gradient(circle at 5px 5px, #eee, #8a8a8a 7px, #555 11px) 2px 3px / 14px 14px no-repeat,
    linear-gradient(45deg, transparent 50%, #333 50%) 88px 9px / 4px 4px no-repeat,
    linear-gradient(-45deg, transparent 50%, #333 50%) 92px 9px / 4px 4px no-repeat,
    linear-gradient(#d9d9d9, #c0c0c0);
}
.caption {
  flex: 1;
  display: flex;
  align-items: center;
  justify-content: center;
  gap: 14px;
  padding-bottom: 1px;
  color: #111;
  white-space: nowrap;
  background: linear-gradient(90deg, #3c5f8a99, transparent 10%, #b5d2f099 18%, #b5d2f099 88%, transparent);
}
.play { width: 15px; height: 24px; display: flex; align-items: center; justify-content: center; background: #8a8a8a; }
.search {
  width: 178px;
  height: 21px;
  padding: 2px 3px 0;
  border: 0;
  background: #f4f4f4;
  font: italic 11px/18px "Open Sans", "Noto Sans", sans-serif;
}
.search::placeholder { color: #777; opacity: 1; }
.acct { width: 108px; display: flex; align-items: center; gap: 4px; padding-left: 4px; color: #eee; }
.acct svg { width: 16px; height: 16px; }
.qm { font: bold 10px "Open Sans", sans-serif; fill: #1d3fa8; }
.wincontrols {
  width: 122px;
  display: flex;
  align-items: flex-start;
  padding: 0 2px 0 15px;
  background: linear-gradient(90deg, #7f9cba, #a9bccd);
}
.wincontrols button {
  width: 28px;
  height: 17px;
  display: flex;
  align-items: center;
  justify-content: center;
  border: 1px solid #3a4a60;
  border-top: 0;
  background: linear-gradient(#c3cedb, #71869f 50%, #8fa4bb);
}
.wincontrols button:first-child { border-radius: 0 0 0 5px; }
.wincontrols .close { flex: 1; border-radius: 0 0 5px 0; background: linear-gradient(#dd9584, #b83a22 50%, #d06a50); }
.tabs { display: flex; align-items: stretch; padding-left: 4px; color: #eee; }
.tabs button { padding: 0 10px 2px 11px; }
.tabs .on {
  padding: 0 10px 2px;
  margin-top: 1px;
  color: #333;
  background: linear-gradient(#cfcfcf, #fff);
}
.tabs .mini { padding: 0 0 2px 22px; }

/* ribbon */
.ribbon {
  display: flex;
  height: 95px;
  background: linear-gradient(#d4d4d4, #8b8b8b);
  border-top: 1px solid #fff;
  border-bottom: 1px solid #6a6a6a;
}
.panel { display: flex; flex-direction: column; background: #fff; border-right: 1px solid #a0a0a0; }
.tools { flex: 1; display: flex; align-items: flex-start; padding: 1px 0 0 1px; }
.panel h2 {
  margin: 0;
  height: 18px;
  display: flex;
  align-items: center;
  justify-content: center;
  gap: 5px;
  padding-bottom: 2px;
  font-size: 11px;
  font-weight: 400;
  background: #ededed;
  border-top: 1px solid #d0d0d0;
  border-left: 1px solid #fff;
}
.panel h2 svg { width: 9px; height: 9px; }
.big { display: flex; flex-direction: column; align-items: center; padding-top: 3px; line-height: 14px; }
.big > svg { width: 31px; height: 31px; margin-bottom: 6px; }
.big .dn { width: 7px; height: 7px; margin-top: 2px; }
.side { width: 10px; margin-top: 52px; }
.side svg { width: 7px; height: 7px; }
.col { flex: none; display: flex; flex-direction: column; }
.col button { height: 24px; display: flex; align-items: center; gap: 5px; padding-left: 2px; }
.col svg { width: 16px; height: 16px; }
.col .dn { width: 7px; height: 7px; margin-left: 2px; }
.p-sketch { width: 79px; }
.p-sketch .big { flex: 1; }
.p-sketch .tools { padding-left: 10px; }
.p-prim { width: 63px; }
.p-prim .big, .p-convert .big { flex: 1; }
.p-create { width: 234px; }
.p-create .big { width: 47px; }
.p-create .big + .col { width: 66px; margin-left: 2px; }
.p-modify { width: 337px; }
.p-modify .big { width: 40px; }
.p-modify .col { width: 78px; }
.p-modify .col:last-child { width: 92px; }
.p-work { width: 127px; }
.p-work .big { width: 55px; }
.p-pattern { width: 99px; }
.p-pattern .tools, .p-surface .tools, .p-plastic .tools, .p-harness .tools { padding-left: 5px; }
.p-surface { width: 210px; }
.p-surface .col:first-child { width: 114px; }
.p-plastic { width: 142px; }
.p-plastic .col:first-child { width: 56px; }
.p-harness { width: 89px; }
.p-convert { width: 73px; }

/* workspace */
.work { flex: 1; display: flex; }
.browser {
  width: 248px;
  display: flex;
  flex-direction: column;
  padding: 0 3px 2px 3px;
  border-right: 2px solid #8a8a8a;
  border-bottom: 1px solid #9a9a9a;
}
.grip { height: 16px; display: flex; align-items: center; gap: 5px; padding-left: 1px; }
.grip i { width: 225px; height: 5px; border: 1px solid #a0a0a0; border-left: 0; background: #fff; }
.bhead {
  height: 21px;
  display: flex;
  align-items: center;
  justify-content: space-between;
  padding: 0 3px 2px 8px;
  background: #ababab;
  color: #fff;
  font: bold 13px/18px "Open Sans", "Noto Sans", sans-serif;
}
.bhead button { display: flex; align-items: center; gap: 4px; }
.bhead svg { width: 9px; height: 9px; }
.bhead .hq { width: 14px; height: 15px; }
.btools { height: 27px; display: flex; align-items: center; gap: 7px; padding: 0 0 4px 3px; }
.btools i { width: 1px; height: 18px; background: #999; }
.btools svg { width: 16px; height: 16px; }
.tree {
  flex: 1;
  background: #fff;
  border: 1px solid #646464;
  color: #000;
  font: 11px/18px "DejaVu Sans Condensed", "DejaVu Sans", sans-serif;
  white-space: nowrap;
}
.root, .tree li { height: 18px; display: flex; align-items: center; gap: 2px; }
.root { padding-left: 5px; }
.tree ul { margin: 0; padding: 0 0 0 24px; list-style: none; }
.tree li { position: relative; }
.tree li::before { content: ""; position: absolute; left: -16px; top: 0; height: 18px; border-left: 1px solid #808080; }
.tree li:last-child::before { height: 9px; }
.tree li::after { content: ""; position: absolute; left: -16px; top: 9px; width: 12px; border-top: 1px solid #808080; }
.tree li.dim { color: #808080; }
.tree li svg, .root svg { width: 16px; height: 16px; }
.tree li button {
  position: absolute;
  z-index: 1;
  left: -20px;
  top: 5px;
  width: 9px;
  height: 9px;
  border: 1px solid #808080;
  background: linear-gradient(#000, #000) 3px 1px / 1px 5px no-repeat, linear-gradient(#000, #000) 1px 3px / 5px 1px no-repeat, #fff;
}
.view { flex: 1; position: relative; background: #fff; border-right: 2px solid #e4e4e4; border-bottom: 1px solid #ddd; }
.scene { position: absolute; inset: 0; width: 100%; height: 100%; }
.ax { font: 12px "Liberation Sans", sans-serif; }
.z { fill: #3030f0; }
.y { fill: #30e030; }
.x { fill: #f03030; }
.docctl { position: absolute; top: 6px; right: 1px; display: flex; gap: 7px; }
.viewcube { position: absolute; top: 45px; right: 26px; width: 80px; height: 84px; }
.ct { font: bold 9px "Liberation Sans", sans-serif; fill: #8c9096; text-anchor: middle; }
.navbar {
  position: absolute;
  top: 145px;
  right: 0;
  width: 36px;
  height: 200px;
  display: flex;
  flex-direction: column;
  align-items: center;
  padding: 2px 0;
  border: 2px solid #c0c0c0;
  border-radius: 5px;
  background: #f3f3f3;
  color: #999;
}
.navbar .end { align-self: flex-end; padding: 0 3px; height: 13px; }
.navbar .wh { height: 33px; margin-top: 1px; }
.navbar .nd { height: 10px; padding-top: 1px; }
.navbar .nd svg { width: 7px; height: 7px; }
.navbar .nb { height: 24px; }
.navbar i { width: 26px; height: 1px; margin: 2px 0; background: #bbb; }
.navbar .end:last-child { margin-top: auto; }

/* status bar */
.status {
  height: 26px;
  display: flex;
  align-items: center;
  padding-top: 2px;
  background: linear-gradient(#fff, #e6e6e6 25%, #a9a9a9);
  border-bottom: 1px solid #14283e;
  font-size: 12px;
  color: #111;
}
.msg { flex: 1; padding-left: 1px; }
.cell { width: 39px; padding-left: 8px; height: 20px; line-height: 20px; border-left: 1px solid #ccc; }

/* taskbar */
.taskbar {
  position: relative;
  height: 39px;
  display: flex;
  align-items: stretch;
  padding-left: 7px;
  border-top: 1px solid #7db0d8;
  background: linear-gradient(90deg, #1a5688, #22669c 3%, #3d9fd4 12%, #3a98d2 45%, #2a82c6 55%, #1e70b4 68%, #1c62a8 78%, #1f5590 84%, #1a4a80 92%, #143560);
}
.aero { position: absolute; inset: 0; width: 100%; height: 100%; }
.taskbar button { position: relative; }
.orb { width: 40px; margin-right: 13px; }
.task {
  display: flex;
  align-items: center;
  justify-content: center;
  margin-right: 4px;
  border: 1px solid #1d4a70;
  border-radius: 3px;
  background: linear-gradient(135deg, #ffffff99, #ffffff44 45%, #ffffff22);
  box-shadow: inset 0 0 0 1px #ffffff80;
}
.w50 { width: 50px; }
.w58 { width: 58px; }
.task.plain { background: none; border-color: transparent; box-shadow: none; }
.task.active { background: linear-gradient(135deg, #fff, #ffffffcc 50%, #ffffff88); }
.task.stack { margin-right: 12px; box-shadow: inset 0 0 0 1px #ffffff80, 4px 0 0 -1px #8fc0e0, 5px 0 0 -1px #1d4a70, 8px 0 0 -1px #7ab4dc; }
.invpro { font: bold 7px "Open Sans", sans-serif; fill: #fff; }
.vb { font: bold 11px "Liberation Sans", sans-serif; fill: #1c55b8; }
.tray { position: relative; margin-left: auto; display: flex; align-items: center; gap: 8px; color: #fff; }
.lang { margin-bottom: 6px; }
.kbd { margin-right: 36px; margin-bottom: 6px; }
.more { margin-right: 4px; }
.clock { width: 77px; text-align: center; line-height: 16px; }
.desk { align-self: stretch; width: 14px; margin-left: -6px; border: 1px solid #8fa8c0; background: linear-gradient(135deg, #4a6f98, #1a3a62); }
```
